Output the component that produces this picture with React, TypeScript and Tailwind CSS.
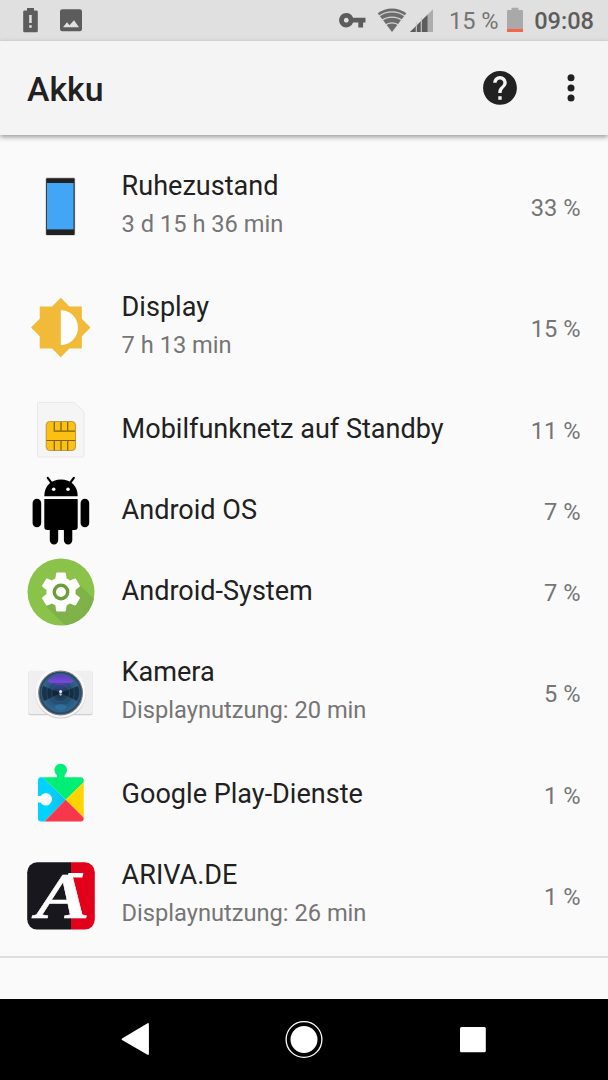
import React from 'react';

type Row = {
  name: string;
  detail?: string;
  percent: string;
  icon: React.ReactNode;
};

function SleepIcon() {
  return (
    <svg viewBox="27 173 68 68" className="w-[68px] h-[68px]">
      <rect x="45.6" y="177.6" width="29.6" height="58" rx="1.4" fill="#b5b5b5" />
      <rect x="46.2" y="178.2" width="28.4" height="56.8" rx="1" fill="#212121" />
      <rect x="47" y="183" width="26.6" height="46.4" fill="#42a5f5" />
    </svg>
  );
}

function DisplayIcon() {
  return (
    <svg viewBox="27 294 68 68" className="w-[68px] h-[68px]">
      <path
        transform="translate(29.2 296) scale(2.63)"
        fill="#f1ba38"
        d="M20 15.31L23.31 12 20 8.69V4h-4.69L12 .69 8.69 4H4v4.69L.69 12 4 15.31V20h4.69L12 23.31 15.31 20H20v-4.69z"
      />
      <path d="M60.8 310.2a17.2 17.4 0 0 1 0 34.8z" fill="#fff" />
    </svg>
  );
}

function SimIcon() {
  return (
    <svg viewBox="27 396 68 68" className="w-[68px] h-[68px]">
      <path d="M38.5 402.3H74L84 411.5V456a1 1 0 0 1-1 1H38.5a1 1 0 0 1-1-1V403.3a1 1 0 0 1 1-1z" fill="#f5f5f5" stroke="#e8e8e8" />
      <rect x="46.2" y="421.5" width="29.3" height="29" rx="3.5" fill="#fbc012" stroke="#a98a38" strokeWidth=".8" />
      <path d="M54.3 422v9.2H75M61 422v9M67.7 422v9M46.5 440.5H75.3M54.3 440.5v10M61 440.5v10M67.7 440.5v10" fill="none" stroke="#7d5f0a" strokeWidth="1.2" />
    </svg>
  );
}

function AndroidIcon() {
  return (
    <svg viewBox="27 477 68 68" className="w-[68px] h-[68px] overflow-visible">
      <path d="M44.3 496.3C44.3 486 51 479.5 61 479.5S77.7 486 77.7 496.3z" />
      <path d="M47.8 477.9l4 5.5M73.8 477.9l-4 5.5" stroke="#000" strokeWidth="2.2" strokeLinecap="round" />
      <circle cx="53.7" cy="489.3" r="1.8" fill="#fff" />
      <circle cx="68" cy="489.3" r="1.8" fill="#fff" />
      <path d="M44.3 499H77.7V527a3 3 0 0 1-3 3H47.3a3 3 0 0 1-3-3z" />
      <rect x="32.6" y="498.8" width="8.6" height="28.4" rx="4.3" />
      <rect x="80.6" y="498.8" width="8.6" height="28.4" rx="4.3" />
      <path d="M49.8 528h8.4v12.3a4.2 4.2 0 0 1-8.4 0zM63.9 528h8.4v12.3a4.2 4.2 0 0 1-8.4 0z" />
    </svg>
  );
}

function SystemIcon() {
  return (
    <svg viewBox="27 557.5 68 68" className="w-[68px] h-[68px]">
      <defs>
        <clipPath id="disc">
          <circle cx="61" cy="591.5" r="33.5" />
        </clipPath>
      </defs>
      <circle cx="61" cy="591.5" r="33.5" fill="#8bc34a" />
      <g clipPath="url(#disc)">
        <path d="M76.5 581L110 614.5 90 650 46 606z" fill="#7fb34a" />
      </g>
      <path
        transform="translate(37.6 568.1) scale(1.95)"
        fill="#fff"
        d="M19.43 12.98c.04-.32.07-.64.07-.98s-.03-.66-.07-.98l2.11-1.65c.19-.15.24-.42.12-.64l-2-3.46c-.12-.22-.39-.3-.61-.22l-2.49 1c-.52-.4-1.08-.73-1.69-.98l-.38-2.65C14.46 2.18 14.25 2 14 2h-4c-.25 0-.46.18-.49.42l-.38 2.65c-.61.25-1.17.59-1.69.98l-2.49-1c-.23-.09-.49 0-.61.22l-2 3.46c-.13.22-.07.49.12.64l2.11 1.65c-.04.32-.07.65-.07.98s.03.66.07.98l-2.11 1.65c-.19.15-.24.42-.12.64l2 3.46c.12.22.39.3.61.22l2.49-1c.52.4 1.08.73 1.69.98l.38 2.65c.03.24.24.42.49.42h4c.25 0 .46-.18.49-.42l.38-2.65c.61-.25 1.17-.59 1.69-.98l2.49 1c.23.09.49 0 .61-.22l2-3.46c.12-.22.07-.49-.12-.64l-2.11-1.65z"
      />
      <circle cx="61" cy="591.5" r="6.7" fill="#fff" stroke="#689f38" strokeWidth="3.4" />
    </svg>
  );
}

function CameraIcon() {
  return (
    <svg viewBox="27 659 68 68" className="w-[68px] h-[68px]">
      <defs>
        <radialGradient id="lens">
          <stop offset="0" stopColor="#7fa3b5" />
          <stop offset=".12" stopColor="#1c3550" />
          <stop offset=".6" stopColor="#28567c" />
          <stop offset=".85" stopColor="#33658e" />
          <stop offset="1" stopColor="#1f3346" />
        </radialGradient>
        <linearGradient id="flare" x1="0" y1="0" x2="0" y2="1">
          <stop offset="0" stopColor="#5a3cc0" />
          <stop offset=".42" stopColor="#7b4ad8" />
          <stop offset=".5" stopColor="#3d4494" />
          <stop offset="1" stopColor="#1f3a62" />
        </linearGradient>
      </defs>
      <rect x="28.3" y="671.5" width="64.4" height="43.7" rx="2" fill="#cfcfcf" />
      <rect x="28.3" y="670.8" width="64.4" height="43.2" rx="2" fill="#efefef" />
      <circle cx="60.6" cy="693.3" r="25.3" fill="#d2d2d2" />
      <circle cx="60.6" cy="692.3" r="25.2" fill="#f8f8f8" />
      <circle cx="60.6" cy="693" r="21.8" fill="url(#lens)" stroke="#77797c" strokeWidth="1.2" />
      <path d="M60.6 693L43 686a19 19 0 0 0 1 15zM60.6 693L78.200 686a19 19 0 0 1-1 15z" fill="#0b1520" opacity=".6" />
      <path d="M60.6 693L47.500 681q13.100-13 26.200 0z" fill="url(#flare)" />
      <circle cx="60.6" cy="693" r="9" fill="none" stroke="#4a7291" strokeWidth=".7" opacity=".5" />
      <circle cx="60.6" cy="693" r="14" fill="none" stroke="#3d6c92" strokeWidth=".7" opacity=".5" />
      <ellipse cx="60.6" cy="707" rx="6" ry="3" fill="#2e83b8" opacity=".5" />
      <circle cx="60.6" cy="691.4" r="1.5" fill="#e8edf0" />
      <circle cx="60.6" cy="694.6" r="1.1" fill="#a9c4d0" />
    </svg>
  );
}

function PlayServicesIcon() {
  return (
    <svg viewBox="27 760.5 68 68" className="w-[68px] h-[68px]">
      <defs>
        <clipPath id="puzzle">
          <rect x="38" y="776.8" width="45.7" height="44.2" rx="3" />
        </clipPath>
        <linearGradient id="sky" x1="0" y1="0" x2="1" y2="0">
          <stop offset="0" stopColor="#00d0ff" />
          <stop offset=".4" stopColor="#00d4ff" />
          <stop offset="1" stopColor="#12bdf0" />
        </linearGradient>
      </defs>
      <path d="M56.8 778v-3.5a6.3 6.3 0 1 1 7.8 0v3.5z" fill="#00ee76" />
      <g clipPath="url(#puzzle)">
        <path d="M36 770V825H40.5L65.7 799.2 42 776z" fill="url(#sky)" />
        <path d="M41 775L65.7 799.2 86 779.5V775z" fill="#00ee76" />
        <path d="M85 780.5L65.7 799.2 85 818.5z" fill="#ffd400" />
        <path d="M43 822.5L65.7 799.2 86 819.5V823z" fill="#f7374b" />
        <path d="M37 795.5h3.5a6.2 6.2 0 1 1 0 6.6H37z" fill="#fafafa" />
      </g>
    </svg>
  );
}

function ArivaIcon() {
  return (
    <svg viewBox="27 861.5 68 68" className="w-[68px] h-[68px] overflow-visible">
      <defs>
        <clipPath id="tile">
          <rect x="27.2" y="861.7" width="67.6" height="67.4" rx="10" />
        </clipPath>
      </defs>
      <g clipPath="url(#tile)">
        <rect x="27" y="861" width="44" height="69" fill="#17171d" />
        <rect x="71" y="861" width="24" height="69" fill="#e2001a" />
      </g>
      {/* bar over the apex of the letter */}
      <path d="M68.5 872.4H83.4L82.4 877H67.2z" fill="#fff" />
      <text
        transform="translate(36 917.3) scale(1.22 1)"
        fontSize="66"
        fill="#fff"
        stroke="#fff"
        strokeWidth=".5"
        className="font-['Liberation_Serif',serif] font-bold italic"
      >
        A
      </text>
    </svg>
  );
}

const rows: Row[] = [
  { name: 'Ruhezustand', detail: '3 d 15 h 36 min', percent: '33 %', icon: <SleepIcon /> },
  { name: 'Display', detail: '7 h 13 min', percent: '15 %', icon: <DisplayIcon /> },
  { name: 'Mobilfunknetz auf Standby', percent: '11 %', icon: <SimIcon /> },
  { name: 'Android OS', percent: '7 %', icon: <AndroidIcon /> },
  { name: 'Android-System', percent: '7 %', icon: <SystemIcon /> },
  { name: 'Kamera', detail: 'Displaynutzung: 20 min', percent: '5 %', icon: <CameraIcon /> },
  { name: 'Google Play-Dienste', percent: '1 %', icon: <PlayServicesIcon /> },
  { name: 'ARIVA.DE', detail: 'Displaynutzung: 26 min', percent: '1 %', icon: <ArivaIcon /> },
];

function StatusBar() {
  return (
    <div className="h-[41px] shrink-0 bg-[#e0e0e0] flex items-center justify-between text-[#5c5c5c] pl-[23px] pr-[14px]">
      <svg viewBox="23 0 60 41" className="w-[60px] h-[41px]" fill="currentColor">
        <path fillRule="evenodd" d="M27 8h7v2.5h2.5a1.3 1.3 0 0 1 1.3 1.3V31a1.3 1.3 0 0 1-1.3 1.3h-12A1.3 1.3 0 0 1 23.2 31V11.8a1.3 1.3 0 0 1 1.3-1.3H27zM29.2 15v8h2.5v-8zM29.2 25.3v2.5h2.5v-2.5z" />
        <path fillRule="evenodd" d="M62.2 9.3h17.6a2.2 2.2 0 0 1 2.2 2.2V29a2.2 2.2 0 0 1-2.2 2.2H62.2A2.2 2.2 0 0 1 60 29V11.5a2.2 2.2 0 0 1 2.2-2.2zM63 27.3H79l-5-7-4.5 5-2.5-3z" />
      </svg>
      <div className="flex items-center">
        <svg viewBox="339 0 96 41" className="w-[96px] h-[41px]">
          <path
            transform="translate(338.9 5.8) scale(1.2)"
            fill="#5c5c5c"
            d="M12.65 10C11.83 7.67 9.61 6 7 6c-3.31 0-6 2.69-6 6s2.69 6 6 6c2.61 0 4.83-1.67 5.65-4H17v4h4v-4h2v-4H12.65zM7 14c-1.1 0-2-.9-2-2s.9-2 2-2 2 .9 2 2-.9 2-2 2z"
          />
          <path d="M393 32L378.7 13.3a23.5 23.5 0 0 1 28.6 0z" fill="#6c6c6c" />
          <path d="M379.5 16.5a22 22 0 0 1 27 0M382.5 20.8a17 17 0 0 1 21 0M386 25.3a11 11 0 0 1 14 0" fill="none" stroke="#d6d6d6" strokeWidth="1.3" />
          <path d="M411 32L434 9.3V32z" fill="#adadad" />
          <path d="M411 32L428.5 14.7V32z" fill="#5c5c5c" />
          <path d="M417.3 22v10M422.3 18v14" stroke="#cbcbcb" strokeWidth="1.1" />
        </svg>
        <span className="text-[23.6px] leading-none text-[#757575] ml-[14.5px] pt-[2px] whitespace-nowrap">15 %</span>
        <svg viewBox="507 0 16 41" className="w-[16px] h-[41px] ml-[8px]">
          <path d="M511.5 7.7h7V10H522a1 1 0 0 1 1 1V29h-16V11a1 1 0 0 1 1-1h3.5z" fill="#a9a9a9" />
          <rect x="507" y="29" width="16" height="3" fill="#f4654a" />
        </svg>
        <span className="text-[23.6px] leading-none font-medium ml-[11.5px] pt-[2px]">09:08</span>
      </div>
    </div>
  );
}

function AppBar() {
  return (
    <header className="relative h-[94px] shrink-0 bg-[#f4f4f4] flex items-center justify-between pl-[27px] pr-[32px] shadow-[0_2px_5px_rgba(0,0,0,0.4)]">
      <h1 className="text-[33.8px] leading-none font-medium text-[#212121] pt-[3px]">Akku</h1>
      <svg viewBox="482 41 94 94" className="w-[94px] h-[94px]">
        <path
          transform="translate(479.7 67.6) scale(1.69)"
          fill="#212121"
          d="M12 2C6.48 2 2 6.48 2 12s4.48 10 10 10 10-4.48 10-10S17.52 2 12 2zm1 17h-2v-2h2v2zm2.07-7.75l-.9.92C13.45 12.9 13 13.5 13 15h-2v-.5c0-1.1.45-2.1 1.17-2.83l1.24-1.26c.37-.36.59-.86.59-1.41 0-1.1-.9-2-2-2s-2 .9-2 2H8c0-2.21 1.79-4 4-4s4 1.79 4 4c0 .88-.36 1.68-.93 2.25z"
        />
        <circle cx="571" cy="77.8" r="3.5" fill="#212121" />
        <circle cx="571" cy="87.9" r="3.5" fill="#212121" />
        <circle cx="571" cy="98" r="3.5" fill="#212121" />
      </svg>
    </header>
  );
}

function UsageRow({ row }: { row: Row }) {
  return (
    <li className={`flex items-center pl-[27px] pr-[27.5px] ${row.detail ? 'h-[121.6px]' : 'h-[81.07px]'}`}>
      <div className="w-[68px] h-[68px] shrink-0 mt-[1px]">{row.icon}</div>
      <div className={`flex-1 ml-[26.6px] ${row.detail ? 'pb-[5px]' : 'pb-[1px]'}`}>
        <p className="text-[27.05px] leading-[32px] text-[#212121]">{row.name}</p>
        {row.detail && <p className="text-[23.65px] leading-[28px] mt-[8px] text-[#757575]">{row.detail}</p>}
      </div>
      <span className="text-[23.65px] leading-[28px] text-[#757575] pt-[3px]">{row.percent}</span>
    </li>
  );
}

export default function App() {
  return (
    <div className="w-full h-screen flex flex-col overflow-hidden bg-[#fafafa] font-[Roboto,sans-serif]">
      <StatusBar />
      <AppBar />
      <main className="flex-1 pt-[10.6px]">
        <ul className="border-b-2 border-[#dedede]">
          {rows.map((row) => (
            <UsageRow key={row.name} row={row} />
          ))}
        </ul>
      </main>
      {/* Navigation buttons */}
      <nav className="h-[81px] shrink-0 bg-black flex items-center justify-center">
        <svg viewBox="121 999 366 81" className="w-[366px] h-[81px]" fill="#fff">
          <path d="M122.5 1039.2L148 1024V1054z" stroke="#fff" strokeWidth="1.8" strokeLinejoin="round" />
          <circle cx="304" cy="1039.5" r="17.9" fill="none" stroke="#fff" strokeWidth="1.3" />
          <circle cx="304" cy="1039.5" r="13.5" />
          <rect x="460" y="1027" width="25.8" height="25.2" rx="1.5" />
        </svg>
      </nav>
    </div>
  );
}
